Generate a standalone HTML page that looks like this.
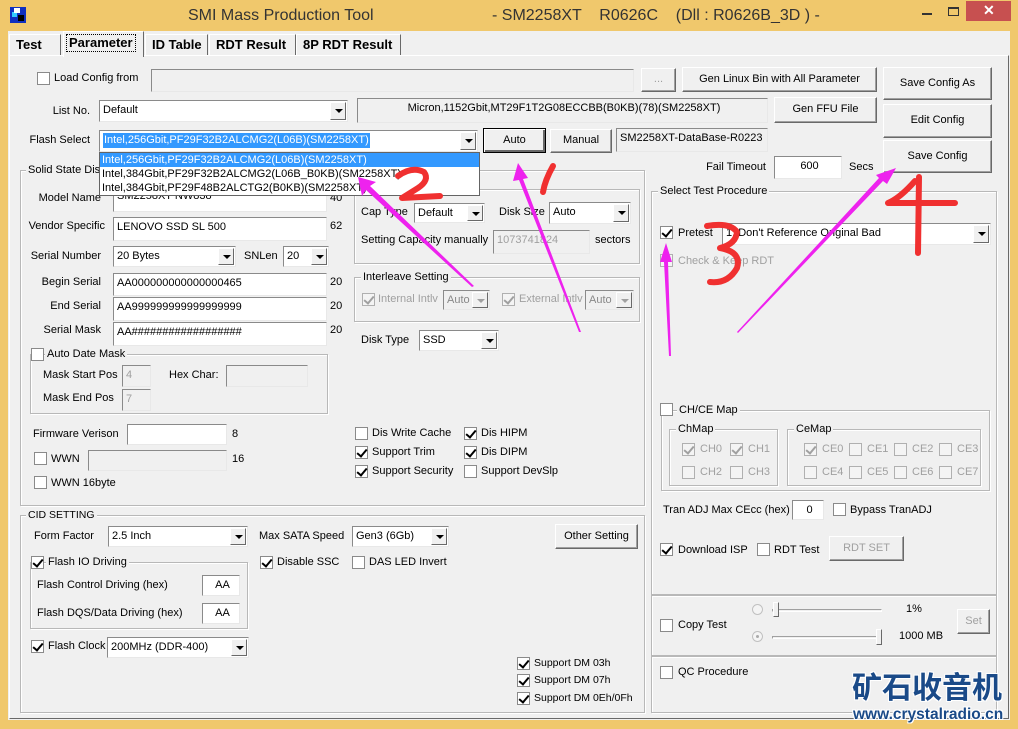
<!DOCTYPE html>
<html><head><meta charset="utf-8"><style>
*{box-sizing:border-box;margin:0;padding:0}
body{width:1018px;height:729px;background:#f0c86c;font-family:"Liberation Sans",sans-serif;font-size:11px;color:#000;position:relative;overflow:hidden}
div,span{position:absolute}
.t{line-height:14px;white-space:nowrap}
.r{text-align:right}
.g{color:#a0a0a0}
.e{background:#fff;border:1px solid;border-color:#8a8a8a #e8e8e8 #e8e8e8 #8a8a8a;line-height:18px;padding-left:3px;white-space:nowrap;overflow:hidden}
.d{background:#f0f0f0}
.b{background:#f0f0f0;border:1px solid;border-color:#fff #696969 #696969 #fff;box-shadow:inset -1px -1px #a0a0a0;text-align:center;white-space:nowrap}
.dd{background:#fff;border:1px solid;border-color:#8a8a8a #e8e8e8 #e8e8e8 #8a8a8a;line-height:18px;padding-left:3px;white-space:nowrap;overflow:hidden}
.dd i{position:absolute;right:1px;top:1px;bottom:1px;width:16px;background:#f0f0f0;border:1px solid;border-color:#fff #696969 #696969 #fff}
.dd i:after{content:"";position:absolute;left:4px;top:6px;border-left:4px solid transparent;border-right:4px solid transparent;border-top:4px solid #000}
.dd.x{background:#f0f0f0;color:#888}.dd.x i:after{border-top-color:#a0a0a0}
.c{width:13px;height:13px;background:#fff;border:1px solid #8a8a8a}
.c.k:after{content:"";position:absolute;left:3px;top:0px;width:4px;height:8px;border-right:2px solid #000;border-bottom:2px solid #000;transform:rotate(40deg)}
.c.dis{background:#f4f4f4;border-color:#b0b0b0}.c.dis.k:after{border-color:#a0a0a0}
.gb{border:1px solid #b8b8b8;box-shadow:1px 1px #fff,inset 1px 1px #fff}
.gl{background:#f0f0f0;padding:0 2px;line-height:14px;white-space:nowrap}
.tab{top:34px;height:22px;background:#f0f0f0;border:1px solid;border-color:#fff #696969 #f0f0f0 #fff;font-weight:bold;font-size:13px;line-height:19px;padding-left:6px;white-space:nowrap}
</style></head><body>
<!-- title -->
<div style="left:10px;top:7px;width:16px;height:16px;background:#1030c0"><div style="left:2px;top:5px;width:5px;height:5px;background:#3cf"></div><div style="left:8px;top:8px;width:6px;height:6px;background:#000"></div><div style="left:4px;top:1px;width:6px;height:5px;background:#fff"></div></div>
<div class="t" style="left:188px;top:6px;font-size:16px;line-height:20px;color:#333">SMI Mass Production Tool</div>
<div class="t" style="left:492px;top:6px;font-size:16px;line-height:20px;color:#333;white-space:pre">- SM2258XT    R0626C    (Dll : R0626B_3D ) -</div>
<div style="left:922px;top:13px;width:10px;height:2px;background:#333"></div>
<div style="left:948px;top:7px;width:11px;height:9px;border:1px solid #333;border-top-width:2px"></div>
<div style="left:966px;top:1px;width:45px;height:20px;background:#c75050"><div class="t" style="left:17px;top:2px;color:#fff;font-size:14px;font-weight:bold">✕</div></div>
<!-- client -->
<div style="left:8px;top:31px;width:1002px;height:689px;background:#f0f0f0"></div>
<div class="tab" style="left:9px;width:52px">Test</div>
<div class="tab" style="left:145px;width:63px">ID Table</div>
<div class="tab" style="left:209px;width:87px">RDT Result</div>
<div class="tab" style="left:296px;width:105px">8P RDT Result</div>
<div style="left:9px;top:55px;width:1000px;height:664px;border:1px solid;border-color:#fff #696969 #696969 #fff"></div>
<div class="tab" style="left:63px;top:31px;height:26px;width:81px;border-bottom:none;padding-left:3px"><span style="left:2px;top:2px;border:1px dotted #000;padding:0 2px;position:absolute;line-height:16px">Parameter</span></div>

<div class="c" style="left:37px;top:72px"></div><div class="t" style="left:54px;top:71px">Load Config from</div>
<div class="e d" style="left:151px;top:69px;width:483px;height:23px"></div>
<div class="b g" style="left:641px;top:68px;width:35px;height:24px;line-height:20px">...</div>
<div class="b" style="left:682px;top:67px;width:195px;height:25px;line-height:22px">Gen Linux Bin with All Parameter</div>
<div class="b" style="left:883px;top:67px;width:109px;height:33px;line-height:31px">Save Config As</div>
<div class="t r" style="left:20px;top:104px;width:70px">List No.</div>
<div class="dd" style="left:99px;top:100px;width:249px;height:22px">Default<i></i></div>
<div class="e d" style="left:357px;top:98px;width:411px;height:25px;text-align:center;line-height:18px">Micron,1152Gbit,MT29F1T2G08ECCBB(B0KB)(78)(SM2258XT)</div>
<div class="b" style="left:774px;top:97px;width:103px;height:26px;line-height:23px">Gen FFU File</div>
<div class="b" style="left:883px;top:104px;width:109px;height:34px;line-height:31px">Edit Config</div>
<div class="t r" style="left:10px;top:133px;width:80px">Flash Select</div>
<div class="dd" style="left:99px;top:130px;width:379px;height:22px"><span style="left:3px;top:2px;background:#3399ff;color:#fff;line-height:15px;padding:0 1px">Intel,256Gbit,PF29F32B2ALCMG2(L06B)(SM2258XT)</span><i></i></div>
<div class="b" style="left:483px;top:128px;width:63px;height:25px;line-height:22px;border-color:#000;box-shadow:inset 1px 1px #fff,inset -2px -2px #696969">Auto</div>
<div class="b" style="left:550px;top:129px;width:62px;height:24px;line-height:21px">Manual</div>
<div class="e d" style="left:616px;top:128px;width:152px;height:24px">SM2258XT-DataBase-R0223</div>
<div class="t r" style="left:680px;top:160px;width:86px">Fail Timeout</div>
<div class="e" style="left:774px;top:156px;width:68px;height:23px;text-align:center">600</div>
<div class="t" style="left:849px;top:160px">Secs</div>
<div class="b" style="left:883px;top:140px;width:109px;height:33px;line-height:31px">Save Config</div>

<!-- Solid state group -->
<div class="gb" style="left:20px;top:170px;width:625px;height:336px"></div>
<div class="gl t" style="left:26px;top:163px">Solid State Disk</div>
<div class="t r" style="left:20px;top:191px;width:81px">Model Name</div>
<div class="e" style="left:113px;top:186px;width:214px;height:26px">SM2258XT NW838</div><div class="t" style="left:330px;top:191px">40</div>
<div class="t r" style="left:20px;top:219px;width:85px">Vendor Specific</div>
<div class="e" style="left:113px;top:217px;width:214px;height:24px">LENOVO SSD SL 500</div><div class="t" style="left:330px;top:219px">62</div>
<div class="t r" style="left:20px;top:249px;width:81px">Serial Number</div>
<div class="dd" style="left:113px;top:246px;width:123px;height:21px">20 Bytes<i></i></div>
<div class="t" style="left:244px;top:249px">SNLen</div>
<div class="dd" style="left:283px;top:246px;width:46px;height:21px">20<i></i></div>
<div class="t r" style="left:20px;top:275px;width:81px">Begin Serial</div>
<div class="e" style="left:113px;top:273px;width:214px;height:23px">AA000000000000000465</div><div class="t" style="left:330px;top:275px">20</div>
<div class="t r" style="left:20px;top:299px;width:81px">End Serial</div>
<div class="e" style="left:113px;top:297px;width:214px;height:24px">AA999999999999999999</div><div class="t" style="left:330px;top:299px">20</div>
<div class="t r" style="left:20px;top:323px;width:81px">Serial Mask</div>
<div class="e" style="left:113px;top:322px;width:214px;height:24px">AA##################</div><div class="t" style="left:330px;top:323px">20</div>
<div class="gb" style="left:30px;top:354px;width:298px;height:60px"></div>
<div class="c" style="left:31px;top:348px"></div><div class="gl t" style="left:45px;top:347px">Auto Date Mask</div>
<div class="t" style="left:43px;top:368px">Mask Start Pos</div>
<div class="e d g" style="left:122px;top:365px;width:29px;height:22px">4</div>
<div class="t" style="left:169px;top:368px">Hex Char:</div>
<div class="e d" style="left:226px;top:365px;width:82px;height:22px"></div>
<div class="t" style="left:43px;top:391px">Mask End Pos</div>
<div class="e d g" style="left:122px;top:389px;width:29px;height:22px">7</div>
<div class="t" style="left:33px;top:427px">Firmware Verison</div>
<div class="e" style="left:127px;top:424px;width:100px;height:21px"></div><div class="t" style="left:232px;top:427px">8</div>
<div class="c" style="left:34px;top:452px"></div><div class="t" style="left:51px;top:452px">WWN</div>
<div class="e d" style="left:88px;top:450px;width:139px;height:21px"></div><div class="t" style="left:232px;top:452px">16</div>
<div class="c" style="left:34px;top:476px"></div><div class="t" style="left:51px;top:476px">WWN 16byte</div>

<div class="gb" style="left:354px;top:189px;width:286px;height:75px"></div>
<div class="t" style="left:361px;top:205px">Cap Type</div>
<div class="dd" style="left:414px;top:203px;width:71px;height:20px">Default<i></i></div>
<div class="t" style="left:499px;top:205px">Disk Size</div>
<div class="dd" style="left:549px;top:202px;width:82px;height:22px">Auto<i></i></div>
<div class="t" style="left:361px;top:233px">Setting Capacity manually</div>
<div class="e d g" style="left:493px;top:230px;width:97px;height:24px">1073741824</div>
<div class="t" style="left:595px;top:233px">sectors</div>
<div class="gb" style="left:354px;top:277px;width:286px;height:45px"></div>
<div class="gl t" style="left:361px;top:270px">Interleave Setting</div>
<div class="c dis k" style="left:362px;top:293px"></div><div class="t g" style="left:378px;top:292px">Internal Intlv</div>
<div class="dd x" style="left:443px;top:290px;width:47px;height:20px">Auto<i></i></div>
<div class="c dis k" style="left:502px;top:293px"></div><div class="t g" style="left:519px;top:292px">External Intlv</div>
<div class="dd x" style="left:585px;top:290px;width:49px;height:20px">Auto<i></i></div>
<div class="t" style="left:361px;top:333px">Disk Type</div>
<div class="dd" style="left:419px;top:330px;width:80px;height:21px">SSD<i></i></div>
<div class="c" style="left:355px;top:427px"></div><div class="t" style="left:372px;top:426px">Dis Write Cache</div>
<div class="c k" style="left:464px;top:427px"></div><div class="t" style="left:481px;top:426px">Dis HIPM</div>
<div class="c k" style="left:355px;top:446px"></div><div class="t" style="left:372px;top:445px">Support Trim</div>
<div class="c k" style="left:464px;top:446px"></div><div class="t" style="left:481px;top:445px">Dis DIPM</div>
<div class="c k" style="left:355px;top:465px"></div><div class="t" style="left:372px;top:464px">Support Security</div>
<div class="c" style="left:464px;top:465px"></div><div class="t" style="left:481px;top:464px">Support DevSlp</div>

<!-- CID -->
<div class="gb" style="left:20px;top:515px;width:625px;height:198px"></div>
<div class="gl t" style="left:26px;top:508px;font-size:10.5px">CID SETTING</div>
<div class="t" style="left:34px;top:529px">Form Factor</div>
<div class="dd" style="left:108px;top:526px;width:140px;height:21px">2.5 Inch<i></i></div>
<div class="t" style="left:259px;top:529px">Max SATA Speed</div>
<div class="dd" style="left:352px;top:526px;width:97px;height:21px">Gen3 (6Gb)<i></i></div>
<div class="b" style="left:555px;top:524px;width:83px;height:25px;line-height:22px">Other Setting</div>
<div class="gb" style="left:30px;top:562px;width:218px;height:67px"></div>
<div class="c k" style="left:31px;top:556px"></div><div class="gl t" style="left:46px;top:555px">Flash IO Driving</div>
<div class="t" style="left:37px;top:578px">Flash Control Driving (hex)</div>
<div class="e" style="left:202px;top:575px;width:38px;height:21px;text-align:center">AA</div>
<div class="t" style="left:37px;top:606px">Flash DQS/Data Driving (hex)</div>
<div class="e" style="left:202px;top:603px;width:38px;height:21px;text-align:center">AA</div>
<div class="c k" style="left:31px;top:640px"></div><div class="t" style="left:48px;top:639px">Flash Clock</div>
<div class="dd" style="left:107px;top:637px;width:142px;height:21px">200MHz (DDR-400)<i></i></div>
<div class="c k" style="left:260px;top:556px"></div><div class="t" style="left:277px;top:555px">Disable SSC</div>
<div class="c" style="left:352px;top:556px"></div><div class="t" style="left:369px;top:555px">DAS LED Invert</div>
<div class="c k" style="left:517px;top:657px"></div><div class="t" style="left:534px;top:656px;font-size:10.5px">Support DM 03h</div>
<div class="c k" style="left:517px;top:674px"></div><div class="t" style="left:534px;top:673px;font-size:10.5px">Support DM 07h</div>
<div class="c k" style="left:517px;top:692px"></div><div class="t" style="left:534px;top:691px;font-size:10.5px">Support DM 0Eh/0Fh</div>

<!-- right -->
<div class="gb" style="left:651px;top:191px;width:346px;height:404px"></div>
<div class="gl t" style="left:658px;top:184px">Select Test Procedure</div>
<div class="c k" style="left:660px;top:226px"></div><div class="t" style="left:678px;top:226px">Pretest</div>
<div class="dd" style="left:722px;top:223px;width:269px;height:22px">1. Don't Reference Original Bad<i></i></div>
<div class="c dis" style="left:660px;top:254px"></div><div class="t g" style="left:678px;top:254px">Check &amp; Keep RDT</div>
<div class="gb" style="left:661px;top:410px;width:329px;height:81px"></div>
<div class="c" style="left:660px;top:403px"></div><div class="gl t" style="left:677px;top:403px">CH/CE Map</div>
<div class="gb" style="left:669px;top:429px;width:109px;height:57px"></div><div class="gl t" style="left:676px;top:422px">ChMap</div>
<div class="gb" style="left:787px;top:429px;width:194px;height:57px"></div><div class="gl t" style="left:794px;top:422px">CeMap</div>
<div class="c dis k" style="left:682px;top:443px"></div><div class="t g" style="left:700px;top:442px">CH0</div>
<div class="c dis k" style="left:730px;top:443px"></div><div class="t g" style="left:748px;top:442px">CH1</div>
<div class="c dis" style="left:682px;top:466px"></div><div class="t g" style="left:700px;top:465px">CH2</div>
<div class="c dis" style="left:730px;top:466px"></div><div class="t g" style="left:748px;top:465px">CH3</div>
<div class="c dis k" style="left:804px;top:443px"></div><div class="t g" style="left:822px;top:442px">CE0</div>
<div class="c dis" style="left:849px;top:443px"></div><div class="t g" style="left:867px;top:442px">CE1</div>
<div class="c dis" style="left:894px;top:443px"></div><div class="t g" style="left:912px;top:442px">CE2</div>
<div class="c dis" style="left:939px;top:443px"></div><div class="t g" style="left:957px;top:442px">CE3</div>
<div class="c dis" style="left:804px;top:466px"></div><div class="t g" style="left:822px;top:465px">CE4</div>
<div class="c dis" style="left:849px;top:466px"></div><div class="t g" style="left:867px;top:465px">CE5</div>
<div class="c dis" style="left:894px;top:466px"></div><div class="t g" style="left:912px;top:465px">CE6</div>
<div class="c dis" style="left:939px;top:466px"></div><div class="t g" style="left:957px;top:465px">CE7</div>
<div class="t" style="left:663px;top:503px">Tran ADJ Max CEcc (hex)</div>
<div class="e" style="left:792px;top:500px;width:32px;height:20px;text-align:center">0</div>
<div class="c" style="left:833px;top:503px"></div><div class="t" style="left:850px;top:503px">Bypass TranADJ</div>
<div class="c k" style="left:660px;top:543px"></div><div class="t" style="left:678px;top:543px">Download ISP</div>
<div class="c" style="left:757px;top:543px"></div><div class="t" style="left:774px;top:543px">RDT Test</div>
<div class="b g" style="left:829px;top:536px;width:75px;height:25px;line-height:22px">RDT SET</div>
<div class="gb" style="left:651px;top:595px;width:346px;height:61px"></div>
<div class="c" style="left:660px;top:619px"></div><div class="t" style="left:678px;top:618px">Copy Test</div>
<div style="left:752px;top:604px;width:11px;height:11px;border-radius:50%;border:1px solid #c0c0c0;background:#f4f4f4"></div>
<div style="left:752px;top:631px;width:11px;height:11px;border-radius:50%;border:1px solid #c0c0c0;background:#f4f4f4"><div style="left:3px;top:3px;width:3px;height:3px;background:#aaa;border-radius:50%"></div></div>
<div style="left:772px;top:609px;width:110px;height:3px;border:1px solid;border-color:#a0a0a0 #fff #fff #a0a0a0"></div>
<div style="left:773px;top:602px;width:6px;height:15px;background:#f0f0f0;border:1px solid;border-color:#fff #696969 #696969 #fff"></div>
<div style="left:772px;top:636px;width:110px;height:3px;border:1px solid;border-color:#a0a0a0 #fff #fff #a0a0a0"></div>
<div style="left:876px;top:629px;width:6px;height:16px;background:#f0f0f0;border:1px solid;border-color:#fff #696969 #696969 #fff"></div>
<div class="t" style="left:906px;top:602px">1%</div>
<div class="t" style="left:899px;top:629px">1000 MB</div>
<div class="b g" style="left:957px;top:609px;width:33px;height:25px;line-height:22px">Set</div>
<div class="gb" style="left:651px;top:656px;width:346px;height:57px"></div>
<div class="c" style="left:660px;top:666px"></div><div class="t" style="left:678px;top:665px">QC Procedure</div>

<!-- dropdown list -->
<div style="left:99px;top:152px;width:381px;height:44px;background:#fff;border:1px solid #646464">
<div class="t" style="left:0;top:0;width:379px;height:14px;background:#3399ff;color:#fff;padding-left:2px">Intel,256Gbit,PF29F32B2ALCMG2(L06B)(SM2258XT)</div>
<div class="t" style="left:2px;top:14px">Intel,384Gbit,PF29F32B2ALCMG2(L06B_B0KB)(SM2258XT)</div>
<div class="t" style="left:2px;top:28px">Intel,384Gbit,PF29F48B2ALCTG2(B0KB)(SM2258XT)</div>
</div>

<!-- annotations -->
<svg style="position:absolute;left:0;top:0" width="1018" height="729">
<g fill="#ee22ee">
<polygon points="358,177 376,182 370,186 474,286 472,287 366,190 362,196"/>
<polygon points="518,163 528,178 523,179 581,332 579,332 519,180 513,181"/>
<polygon points="666,243 672,262 668,262 671,356 669,356 664,262 660,262"/>
<polygon points="896,168 887,184 883,181 738,333 737,332 879,178 876,175"/>
</g>
<g fill="none" stroke="#f03030" stroke-width="6" stroke-linecap="round" stroke-linejoin="round">
<path d="M398,176 Q412,166 424,172 Q430,180 418,188 L402,198 L440,196"/>
<path d="M553,166 Q545,180 543,192"/>
<path d="M707,226 Q730,222 737,232 Q736,244 720,248 Q742,252 737,268 Q728,284 710,282"/>
<path d="M915,181 Q900,198 888,203 L955,203 M919,177 L918,253"/>
</g>
</svg>

<div class="t" style="left:852px;top:668px;font-size:30px;line-height:34px;font-weight:bold;color:#1a4a88;font-family:'Noto Sans CJK SC',sans-serif;letter-spacing:0px;text-shadow:1px 1px #fff,-1px -1px #fff,1px -1px #fff,-1px 1px #fff">矿石收音机</div>
<div class="t" style="left:853px;top:705px;font-size:15.5px;line-height:20px;font-weight:bold;color:#1a4a88;text-shadow:1px 1px #fff,-1px -1px #fff,1px -1px #fff,-1px 1px #fff">www.crystalradio.cn</div>
</body></html>
